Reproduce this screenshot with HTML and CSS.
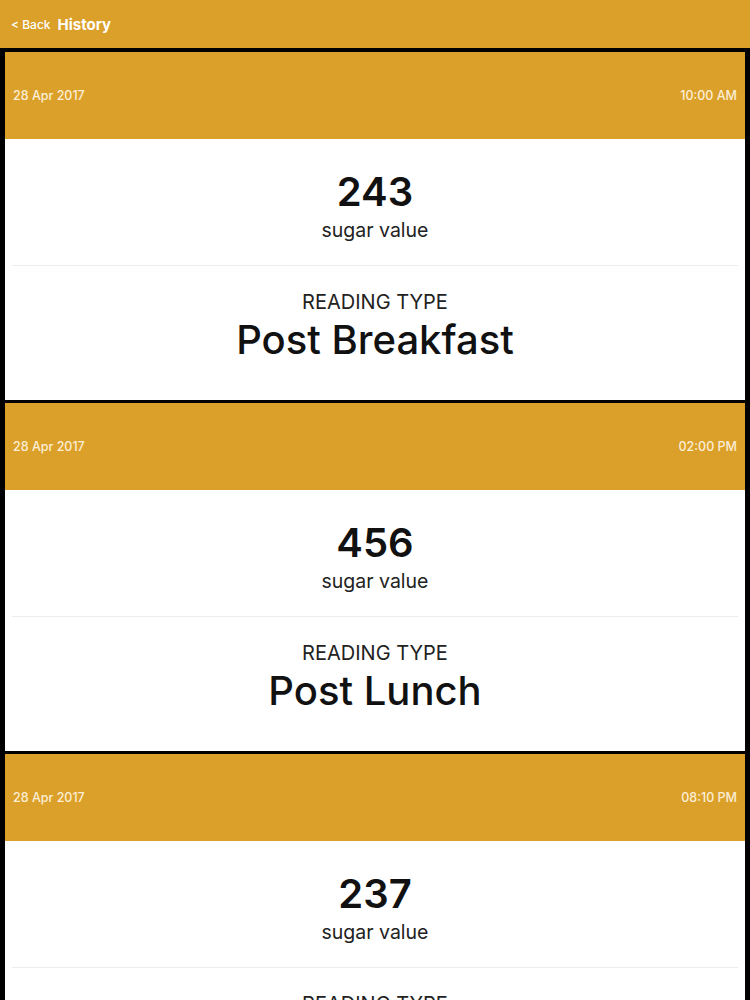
FILE: index.html
```html
<!DOCTYPE html>
<html lang="en">
  <head>
    <meta charset="UTF-8" />
    <title>History</title>
    <link rel="stylesheet" href="styles.css">
  </head>
  <body>
    <header class="nav">
      <span class="nav-back">&lt; Back</span>
      <span class="nav-title">History</span>
    </header>

    <main class="list">
      <section class="card">
        <div class="card-head">
          <span>28 Apr 2017</span>
          <span>10:00 AM</span>
        </div>
        <div class="card-body">
          <div class="value">243</div>
          <div class="value-label">sugar value</div>
          <hr class="divider" />
          <div class="type-label">READING TYPE</div>
          <div class="type">Post Breakfast</div>
        </div>
      </section>

      <section class="card">
        <div class="card-head">
          <span>28 Apr 2017</span>
          <span>02:00 PM</span>
        </div>
        <div class="card-body">
          <div class="value">456</div>
          <div class="value-label">sugar value</div>
          <hr class="divider" />
          <div class="type-label">READING TYPE</div>
          <div class="type">Post Lunch</div>
        </div>
      </section>

      <section class="card">
        <div class="card-head">
          <span>28 Apr 2017</span>
          <span>08:10 PM</span>
        </div>
        <div class="card-body">
          <div class="value">237</div>
          <div class="value-label">sugar value</div>
          <hr class="divider" />
          <div class="type-label">READING TYPE</div>
          <div class="type">Post Dinner</div>
        </div>
      </section>
    </main>
  </body>
</html>
```

FILE: styles.css
```css
body {
  margin: 0;
  background: #000;
  font-family: Inter, "Liberation Sans", sans-serif;
  color: #111;
  height: 1000px;
  overflow: hidden;
}

.nav {
  height: 48px;
  background: #dba029;
  color: #fff;
  display: flex;
  align-items: center;
  gap: 7px;
  padding: 0 11px;
}

.nav-back {
  font-size: 12px;
  font-weight: 500;
}

.nav-title {
  font-size: 15px;
  font-weight: 700;
}

.list {
  padding: 4px 5px 0;
  display: flex;
  flex-direction: column;
  gap: 3px;
}

.card-head {
  height: 87px;
  background: #dba029;
  color: #fbeed6;
  font-size: 12.5px;
  font-weight: 500;
  display: flex;
  align-items: center;
  justify-content: space-between;
  padding: 0 8px;
}

.card-body {
  background: #fff;
  padding: 31px 7px 36px;
  text-align: center;
}

.value {
  font-size: 40px;
  font-weight: 600;
  line-height: 44px;
}

.value-label {
  font-size: 19.5px;
  line-height: 24px;
  margin-top: 4px;
  color: #222;
}

.divider {
  border: none;
  border-top: 1px solid #ececec;
  margin: 23px 0 24px;
}

.type-label {
  font-size: 20px;
  line-height: 24px;
  color: #222;
}

.type {
  font-size: 40px;
  font-weight: 500;
  line-height: 48px;
  margin-top: 2px;
}
```
